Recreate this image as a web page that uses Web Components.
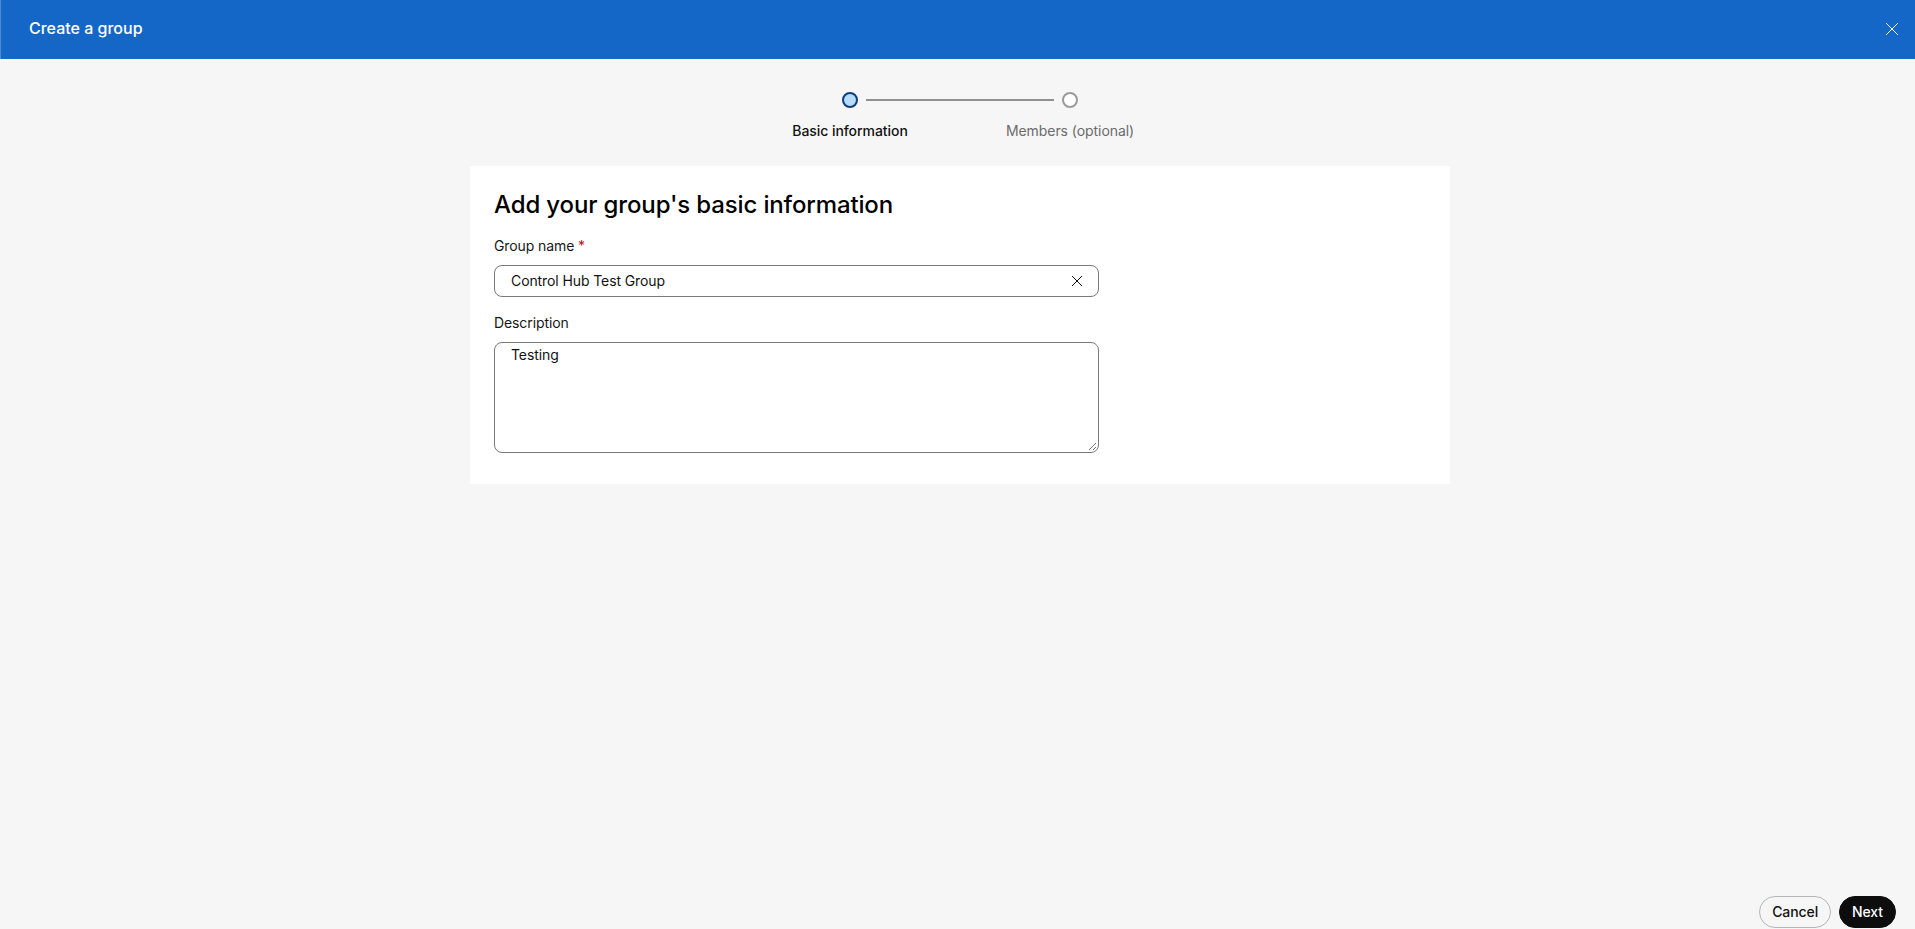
<!DOCTYPE html>
<html><head><meta charset="utf-8">
<style>
html,body{margin:0;height:100%;background:#f6f6f6;overflow:hidden}
body{font-family:Inter,"Liberation Sans",sans-serif;color:#0a0a0a}
wizard-page{height:929px}
</style></head>
<body>
<wizard-page title-text="Create a group">
  <step-bar></step-bar>
  <form-card heading="Add your group's basic information">
    <text-field label="Group name" required value="Control Hub Test Group"></text-field>
    <area-field label="Description" value="Testing"></area-field>
  </form-card>
  <pill-button slot="footer">Cancel</pill-button>
  <pill-button slot="footer" primary>Next</pill-button>
</wizard-page>
<script>
function def(name, html, init){
  customElements.define(name, class extends HTMLElement{
    constructor(){super();this.attachShadow({mode:'open'}).innerHTML=html;}
    connectedCallback(){init&&init(this,this.shadowRoot);}
  });
}
def('wizard-page',`<style>
:host{display:flex;flex-direction:column;box-sizing:border-box}
header{flex:none;height:59px;background:#1467c6;border-left:1px solid #4f8ad3;box-sizing:border-box;display:flex;align-items:center;justify-content:space-between;padding:0 15px 0 28px;color:#fff;font-size:16px;font-weight:500}
header span{margin-bottom:3px}
header svg{margin-bottom:1px}
main{flex:1;display:flex;flex-direction:column;align-items:center;padding-left:5px}
footer{flex:none;display:flex;justify-content:flex-end;gap:8px;padding:0 19px 1px 0}
svg{display:block}
</style>
<header><span id="t"></span><svg width="16" height="16" viewBox="0 0 16 16"><path d="M2 2l12 12M14 2L2 14" stroke="#fff" stroke-width="1" fill="none"/></svg></header>
<main><slot></slot></main>
<footer><slot name="footer"></slot></footer>`,(e,s)=>{s.getElementById('t').textContent=e.getAttribute('title-text')});
def('step-bar',`<style>
:host{display:block;width:440px;height:107px;box-sizing:border-box;padding-top:32px;font-size:14px;line-height:20px;letter-spacing:-.06px}
.track{display:flex;align-items:center;justify-content:center;height:18px}
.dot{width:16px;height:16px;box-sizing:border-box;border-radius:50%;flex:none}
.a{background:#b5dcfb;border:2px solid #0d3f7f}
.b{background:#fff;border:2px solid #9b9b9b}
.line{width:188px;height:2px;background:#8f8f8f;margin:0 8px}
.labels{display:grid;grid-template-columns:220px 220px;margin-top:12px;text-align:center}
.on{font-weight:500;color:#121212}.off{color:#6b6b6b}
</style>
<div class="track"><span class="dot a"></span><span class="line"></span><span class="dot b"></span></div>
<div class="labels"><span class="on">Basic information</span><span class="off">Members (optional)</span></div>`);
def('form-card',`<style>
:host{display:block;width:980px;box-sizing:border-box;background:#fff;padding:23px 24px 31px;}
h2{margin:0 0 15px;font-size:24px;line-height:32px;font-weight:500;color:#000;letter-spacing:-.14px}
.stack{display:flex;flex-direction:column;gap:16px}
</style><h2 id="h"></h2><div class="stack"><slot></slot></div>`,(e,s)=>{s.getElementById('h').textContent=e.getAttribute('heading')});
def('text-field',`<style>
:host{display:block;width:605px;font-size:14px;line-height:20px;letter-spacing:-.1px}
.l{display:block;margin-bottom:9px;color:#171717}
.r{color:#b3122a}
.box{height:32px;box-sizing:border-box;border:1px solid #7a7a7a;border-radius:8px;display:flex;align-items:center;justify-content:space-between;padding:0 15px 0 16px;color:#121212}
svg{display:block}
</style><span class="l"><span id="l"></span><span id="r" class="r"></span></span>
<div class="box"><span id="v"></span><svg width="12" height="12" viewBox="0 0 12 12"><path d="M1 1l10 10M11 1L1 11" stroke="#121212" stroke-width="1" fill="none"/></svg></div>`,(e,s)=>{
 s.getElementById('l').textContent=e.getAttribute('label');
 if(e.hasAttribute('required'))s.getElementById('r').textContent=' *';
 s.getElementById('v').textContent=e.getAttribute('value');
});
def('area-field',`<style>
:host{display:block;width:605px;font-size:14px;line-height:20px;letter-spacing:-.1px}
.l{display:block;margin-bottom:9px;color:#171717}
.box{position:relative;height:111px;box-sizing:border-box;border:1px solid #7a7a7a;border-radius:8px;padding:2px 16px;color:#121212}
svg{position:absolute;right:1px;bottom:1px;display:block}
</style><span class="l" id="l"></span>
<div class="box"><span id="v"></span><svg width="9" height="9" viewBox="0 0 9 9"><path d="M1 8L8 1M5 8L8 5" stroke="#6f6f6f" stroke-width="1" fill="none"/></svg></div>`,(e,s)=>{
 s.getElementById('l').textContent=e.getAttribute('label');
 s.getElementById('v').textContent=e.getAttribute('value');
});
def('pill-button',`<style>
:host{display:block;font-size:14px;font-weight:500;line-height:20px;letter-spacing:-.1px}
div{height:32px;box-sizing:border-box;border:1px solid #b5b5b5;border-radius:16px;padding:5px 12px;color:#121212;background:transparent;text-align:center}
:host([primary]) div{background:#0d0d0d;border-color:#0d0d0d;color:#fff}
</style><div><slot></slot></div>`);
</script>
</body></html>
